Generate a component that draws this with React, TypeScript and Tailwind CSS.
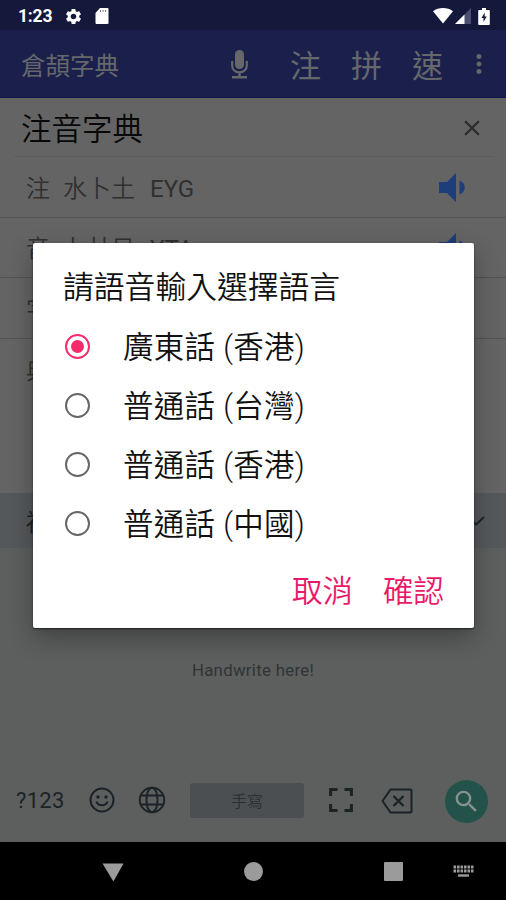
import { MdClose, MdMoreVert, MdSearch, MdSettings } from 'react-icons/md';

type EntryData = { char: string; code?: string; keys?: string };

const entries: EntryData[] = [
  { char: '注', code: '水卜土', keys: 'EYG' },
  { char: '音', code: '卜廿日', keys: 'YTA' },
  { char: '字' },
  { char: '典' },
];

const languages = ['廣東話 (香港)', '普通話 (台灣)', '普通話 (香港)', '普通話 (中國)'];

function StatusBar() {
  return (
    <div className="flex h-[30px] items-center bg-[#14193c] pl-[18px] pr-[16px] pt-0.5 text-white">
      <span className="mt-0.5 w-[35px] font-[Roboto] text-[17.500px] font-bold leading-none tracking-[-0.2px]">1:23</span>
      <MdSettings size={19} className="ml-[11px]" />
      <svg width="14" height="16" viewBox="0 0 14 16" className="ml-3">
        <path d="M5 0h7.5a1 1 0 0 1 1 1v14a1 1 0 0 1-1 1h-11a1 1 0 0 1-1-1V5z" fill="currentColor" />
        <path d="M5.500 2v2M8 2v2M10.500 2v2" stroke="#777b90" strokeWidth="1" />
      </svg>
      <svg width="20" height="16" viewBox="0 0 20 16" className="ml-auto">
        <path d="M0 3.2C5.6-1 14.4-1 20 3.2L10 15.5z" fill="currentColor" />
      </svg>
      <svg width="16" height="16" viewBox="0 0 16 16" className="ml-[2px]">
        <path d="M0 16 16 0v16z" fill="#4b4f70" />
        <path d="M0 16 9.500 6.500V16z" fill="currentColor" />
      </svg>
      <svg width="12" height="17" viewBox="0 0 12 17" className="ml-[7px]">
        <path d="M4 0h4v2h3a.8.8 0 0 1 .8.8v13.400a.8.8 0 0 1-.8.8H1a.8.8 0 0 1-.8-.8V2.800A.8.8 0 0 1 1 2h3z" fill="currentColor" />
        <path d="M6.700 4.500 3.500 10h2v4l3.200-5.500h-2z" fill="#14193c" />
      </svg>
    </div>
  );
}

function AppBar() {
  return (
    <div className="flex h-[68px] items-center border-b border-[#101850] bg-[#1a204b] pl-[21px] text-[#65676b]">
      <h1 className="mt-[3px] w-[210px] text-[24.500px] leading-none">倉頡字典</h1>
      <svg width="17" height="29" viewBox="0 0 17 29" className="mt-px">
        <rect x="4" y="0" width="9" height="19" rx="4.500" fill="currentColor" />
        <path d="M1.200 11v4.500c0 9 14.600 9 14.600 0V11" fill="none" stroke="currentColor" strokeWidth="2.200" />
        <path d="M8.500 22v4.500M1 27.300h15" stroke="currentColor" strokeWidth="2.400" />
      </svg>
      <div className="ml-[42px] flex gap-[30px] text-[31px] leading-none">
        <span>注</span>
        <span>拼</span>
        <span>速</span>
      </div>
      <MdMoreVert size={30} className="ml-[21px] mt-px" />
    </div>
  );
}

function Entry({ char, code, keys }: EntryData) {
  return (
    <li className="flex h-[60.600px] items-center border-b border-[#535353] pl-[26px] pr-[41px] text-[24px] text-[#303030] last:border-b-0">
      <span className="w-[37px] font-[350]">{char}</span>
      {code && (
        <>
          <span className="w-[87px] font-[350]">{code}</span>
          <span className="mt-[4px] font-[Roboto] text-[24px]">{keys}</span>
          <svg width="26" height="29" viewBox="0 0 26 29" className="ml-auto mt-px text-[#1d3d7b]">
            <path d="M0 9h8l9-9v29l-9-9H0zM20.500 7.500c7 2.500 7 11.500 0 14z" fill="currentColor" />
          </svg>
        </>
      )}
    </li>
  );
}

function Keyboard() {
  return (
    <div className="flex h-[349px] flex-col bg-[#5c5f5e] text-[#1b2327]">
      <div className="flex h-[55px] items-center justify-between bg-[#55585b] pl-[26px] pr-[21px]">
        <span className="text-[24px]">福</span>
        <svg width="14" height="10" viewBox="0 0 14 10">
          <path d="m1 4.500 4 4L13 1" fill="none" stroke="currentColor" strokeWidth="2" />
        </svg>
      </div>
      <p className="mt-[111px] text-center font-[Roboto] text-[16.800px] leading-[22px] tracking-[0.3px] text-[#303434]">
        Handwrite here!
      </p>
      <div className="mb-[19px] mt-auto flex h-[44px] items-center pl-4 pr-[18px]">
        <span className="-mt-px w-[73px] font-[Roboto] text-[22px] tracking-[0.3px]">?123</span>
        <svg width="26" height="26" viewBox="0 0 26 26" className="-mt-0.5" fill="none" stroke="currentColor" strokeWidth="2">
          <circle cx="13" cy="13" r="11.500" />
          <path d="M7.500 14.500c1.500 5 9.500 5 11 0" />
          <circle cx="9" cy="10" r="1.700" fill="currentColor" stroke="none" />
          <circle cx="17" cy="10" r="1.700" fill="currentColor" stroke="none" />
        </svg>
        <svg width="28" height="28" viewBox="0 0 28 28" className="-mt-0.5 ml-[23px]" fill="none" stroke="currentColor" strokeWidth="2">
          <circle cx="14" cy="14" r="12.200" />
          <ellipse cx="14" cy="14" rx="5.600" ry="12.200" />
          <path d="M3 9.500h22M3 18.500h22" />
        </svg>
        <div className="-mt-0.5 ml-[24px] flex h-[35px] w-[114px] items-center justify-center rounded-[3px] bg-[#4c4f52] text-[16px] font-[350] text-[#2b2f32]">
          手寫
        </div>
        <svg width="24" height="24" viewBox="0 0 24 24" className="-mt-0.5 ml-[25px]" fill="none" stroke="currentColor" strokeWidth="3">
          <path d="M1.600 8V1.600H8.500M15.500 1.600h6.900V8M22.400 16v6.400h-6.900M8.500 22.400H1.600V16" />
        </svg>
        <svg width="32" height="26" viewBox="0 0 32 26" className="ml-[28px]" fill="none" stroke="currentColor" strokeWidth="2">
          <path d="M9.500 1.500H29a1.500 1.500 0 0 1 1.500 1.500v20a1.500 1.500 0 0 1-1.500 1.500H9.500L1.500 13z" strokeLinejoin="round" />
          <path d="m12.500 8 10 10M22.500 8l-10 10" strokeWidth="2.300" />
        </svg>
        <div className="ml-auto flex size-[43px] items-center justify-center rounded-full bg-[#225249] text-[#85918e]">
          <MdSearch size={29} />
        </div>
      </div>
    </div>
  );
}

function NavBar() {
  return (
    <div className="flex h-[58px] items-center bg-black pl-[102px] text-[#9b9b9b]">
      <svg width="22" height="19" viewBox="0 0 22 19" className="mt-0.5">
        <path d="M.5.500h21L11.400 18.500z" fill="currentColor" />
      </svg>
      <div className="ml-[120px] size-[19px] rounded-full bg-[#9b9b9b]" />
      <div className="ml-[121px] size-[19px] rounded-[1px] bg-[#9b9b9b]" />
      <svg width="21" height="13" viewBox="0 0 21 13" className="ml-[50px]">
        <path d="M.5 2H20.500M.5 6H20.500" stroke="currentColor" strokeWidth="3" strokeDasharray="2.600 .9" />
        <path d="M5 10.500h11" stroke="currentColor" strokeWidth="2.400" />
      </svg>
    </div>
  );
}

function LanguageDialog() {
  return (
    <div className="absolute left-[33px] top-[243px] flex h-[385px] w-[441px] flex-col rounded-[2px] bg-white text-[30.500px] font-[350] text-[#111] shadow-[0_1px_2px_rgba(0,0,0,0.6),0_10px_24px_rgba(0,0,0,0.3)]">
      <h2 className="mt-[20px] pl-[30px] text-[30.800px] leading-[44px]">請語音輸入選擇語言</h2>
      <ul className="mt-[9.500px]">
        {languages.map((language, i) => (
          <li key={language} className="flex h-[59px] items-center pl-[32px]">
            <span
              className={
                i === 0
                  ? 'flex size-[25px] items-center justify-center rounded-full border-[2.500px] border-[#f92a6b]'
                  : 'size-[25px] rounded-full border-2 border-[#666]'
              }
            >
              {i === 0 && <span className="size-[13px] rounded-full bg-[#f92a6b]" />}
            </span>
            <span className="ml-[33px] mt-[4px] font-[Roboto,'Noto_Sans_CJK_TC',sans-serif] tracking-[0.300px]">{language}</span>
          </li>
        ))}
      </ul>
      <div className="mt-[14.500px] flex justify-end gap-[30px] pr-[30px] leading-[44px] text-[#e9196a]">
        <button>取消</button>
        <button>確認</button>
      </div>
    </div>
  );
}

export default function App() {
  return (
    <div className="relative h-[900px] w-[506px] overflow-hidden bg-[#646464] font-['Noto_Sans_CJK_TC',sans-serif]">
      <StatusBar />
      <AppBar />
      <div className="h-[395px] overflow-hidden">
        <div className="ml-[14px] mr-[12px] flex h-[59px] items-center justify-between border-b border-[#5d5d5d] pl-[7px] pr-[9px]">
          <span className="text-[30.500px] font-[350] leading-none text-[#080808]">注音字典</span>
          <MdClose size={26} className="mt-0.5 text-[#2c2c2c]" />
        </div>
        <ul>
          {entries.map((entry) => (
            <Entry key={entry.char} {...entry} />
          ))}
        </ul>
      </div>
      <Keyboard />
      <NavBar />
      <LanguageDialog />
    </div>
  );
}
